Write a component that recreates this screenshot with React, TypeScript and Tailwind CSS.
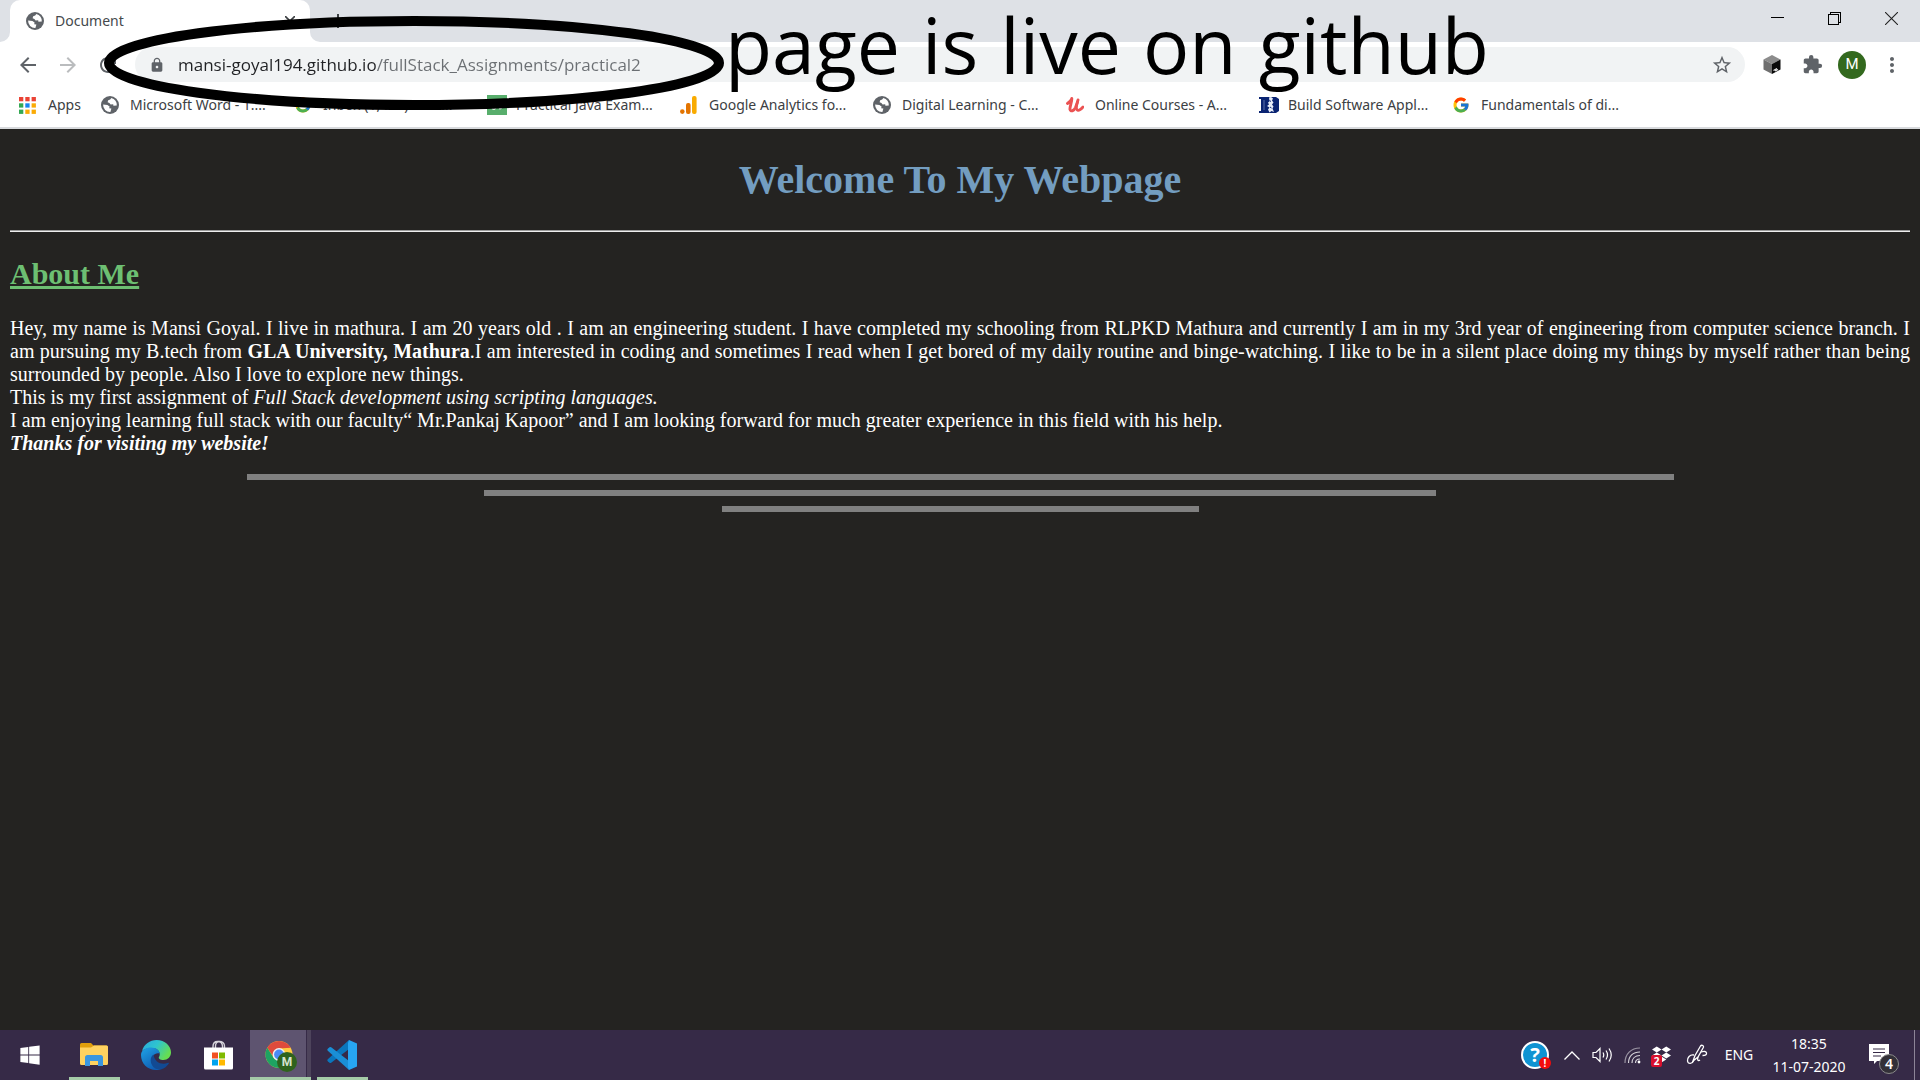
import React from "react";
import { FcGoogle } from "react-icons/fc";
import { FaDropbox, FaWindows } from "react-icons/fa";
import { MdArrowBack, MdArrowForward, MdExtension, MdLock, MdMoreVert, MdRefresh, MdStarBorder } from "react-icons/md";

function Globe() {
  return (
    <svg viewBox="0 0 18 18" className="size-[18px] shrink-0" aria-hidden="true">
      <circle cx="9" cy="9" r="9" fill="#5f6368" />
      <path d="M10.3 2.1 9.2 3.5 7.2 4.2 6.6 6.3 8.4 6.9 9.6 8.4 12.2 8.2 12.4 9.8 15.8 9.6A6.9 6.9 0 0 0 10.3 2.1Z" fill="#fff" />
      <path d="M2.1 8.6 6.4 8.9 8.6 10.4 8.2 12.2 10.4 12.6 9.4 15.9A6.9 6.9 0 0 1 2.1 8.6Z" fill="#fff" />
    </svg>
  );
}

function AppsGrid() {
  const colors = ["#ea4335", "#ea4335", "#ea4335", "#34a853", "#1a85f0", "#fbab05", "#34a853", "#fbab05", "#fbab05"];
  return (
    <svg viewBox="0 0 17 17" className="size-[17px] shrink-0" aria-hidden="true">
      {colors.map((c, i) => (
        <rect key={i} x={(i % 3) * 6.3} y={Math.floor(i / 3) * 6.3} width="4.3" height="4.3" fill={c} />
      ))}
    </svg>
  );
}

function GreenBadge() {
  return (
    <svg viewBox="0 0 20 20" className="size-5 shrink-0" aria-hidden="true">
      <rect width="20" height="20" fill="#58ae6c" />
      <path d="M5 13.5c2 1.500 4 0 4-2V7M12 13.500c2 .5 3-1 3-3V7" stroke="#fff" strokeWidth="1.400" fill="none" />
    </svg>
  );
}

function AnalyticsIcon() {
  return (
    <svg viewBox="0 0 18 18" className="size-[18px] shrink-0" aria-hidden="true">
      <rect x="12" y="0" width="4.600" height="18" rx="2" fill="#f9ab00" />
      <rect x="6" y="7" width="4.600" height="11" rx="2" fill="#e37400" />
      <circle cx="2.300" cy="15.600" r="2.300" fill="#e37400" />
    </svg>
  );
}

function UdemyIcon() {
  return (
    <svg viewBox="0 0 18 18" className="size-[18px] shrink-0" fill="none" stroke="#eb5252" strokeLinecap="round" strokeLinejoin="round" aria-hidden="true">
      <path d="M1.500 7.500C3.500 6 5.500 4 5.800 2.500 6 6 3.500 11 4 13.500c.5 2.500 4 1.500 5.500-2C10.500 9 11.500 6 12 4" strokeWidth="2.900" />
      <path d="M11.500 6C10 10.500 10 14 12 14.300c1.700.2 3.500-1.600 5-3.300" strokeWidth="2.700" />
    </svg>
  );
}

function DukeIcon() {
  return (
    <svg viewBox="0 0 20 18" className="h-[18px] w-5 shrink-0" aria-hidden="true">
      <path d="M0 1h17l3 2v12l-3 2H0v-2h2V3H0Z" fill="#0a2472" />
      <path d="M5 4v10" stroke="#5c72ad" strokeWidth="1" />
      <path d="M10 1.500 12 1l2 1.500-1 2 1.500 2-1.500 2 1.500 2-1 2 1.500 3.500-2.500-1-2 1.500-1.500-3 1.500-2-2.500-1.500 2-1.500-1-2 1.500-1Z" fill="#e8edf8" />
      <path d="m10.500 4.500 1.500 1M11 11l1.500 1" stroke="#0a2472" strokeWidth="1" />
    </svg>
  );
}

const bookmarks = [
  { label: "Microsoft Word - 1....", icon: <Globe /> },
  { label: "Inbox (1,479) - ma...", icon: <FcGoogle className="size-[18px] shrink-0" /> },
  { label: "Practical Java Exam...", icon: <GreenBadge /> },
  { label: "Google Analytics fo...", icon: <AnalyticsIcon /> },
  { label: "Digital Learning - C...", icon: <Globe /> },
  { label: "Online Courses - A...", icon: <UdemyIcon /> },
  { label: "Build Software Appl...", icon: <DukeIcon /> },
  { label: "Fundamentals of di...", icon: <FcGoogle className="size-[18px] shrink-0" /> },
];

function TabStrip() {
  return (
    <div className="flex h-[42px] bg-[#dee1e6] pl-2.5">
      <div className="relative flex w-[300px] items-center rounded-t-[10px] bg-white pr-3 pl-4 text-sm text-[#45494d]">
        <svg className="absolute bottom-0 -left-2.5 size-2.5" viewBox="0 0 10 10" aria-hidden="true">
          <path d="M10 0v10H0A10 10 0 0 0 10 0Z" fill="#fff" />
        </svg>
        <svg className="absolute -right-2.5 bottom-0 size-2.5" viewBox="0 0 10 10" aria-hidden="true">
          <path d="M0 0v10h10A10 10 0 0 1 0 0Z" fill="#fff" />
        </svg>
        <Globe />
        <span className="ml-[11px] flex-1">Document</span>
        <button aria-label="Close tab" className="flex size-4 items-center justify-center">
          <svg viewBox="0 0 10 10" className="size-2.5" stroke="#3c4043" strokeWidth="1.600">
            <path d="m0 0 10 10M10 0 0 10" />
          </svg>
        </button>
      </div>
      <button aria-label="New tab" className="ml-5 flex w-4 items-center justify-center">
        <svg viewBox="0 0 14 14" className="size-3.5" stroke="#3c4043" strokeWidth="2">
          <path d="M7 0v14M0 7h14" />
        </svg>
      </button>
      <div className="ml-auto flex h-9">
        <button aria-label="Minimize" className="flex w-[57px] items-center justify-center">
          <svg viewBox="0 0 13 13" className="size-[13px]" stroke="#000" shapeRendering="crispEdges">
            <path d="M0 5.500h13" />
          </svg>
        </button>
        <button aria-label="Restore" className="flex w-[57px] items-center justify-center">
          <svg viewBox="0 0 13 13" className="size-[13px]" stroke="#000" fill="none" shapeRendering="crispEdges">
            <path d="M.5 2.500h10v10H.5ZM2.500 2.500v-2h10v10h-2" />
          </svg>
        </button>
        <button aria-label="Close" className="flex w-[57px] items-center justify-center">
          <svg viewBox="0 0 13 13" className="size-[13px]" stroke="#222" strokeWidth="1.100">
            <path d="m0 0 13 13M13 0 0 13" />
          </svg>
        </button>
      </div>
    </div>
  );
}

function Toolbar() {
  return (
    <div className="flex h-[45px] items-center bg-white px-2 text-[#5f6368]">
      <button aria-label="Back" className="flex w-10 justify-center">
        <MdArrowBack className="size-6" />
      </button>
      <button aria-label="Forward" className="flex w-10 justify-center text-[#babcbe]">
        <MdArrowForward className="size-6" />
      </button>
      <button aria-label="Reload" className="flex w-10 justify-center">
        <MdRefresh className="size-6" />
      </button>
      <div className="ml-[7px] flex h-[35px] flex-1 items-center rounded-full bg-[#f1f3f4] pr-3 pl-3.5">
        <MdLock className="size-4" />
        <input
          aria-label="Address"
          className="ml-[13px] flex-1 bg-[linear-gradient(to_right,#202124_199px,#6b6f73_199px)] bg-clip-text font-['Open_Sans',sans-serif] text-[17px] text-transparent outline-none"
          defaultValue="mansi-goyal194.github.io/fullStack_Assignments/practical2"
        />
        <button aria-label="Bookmark this page">
          <MdStarBorder className="size-[22px]" />
        </button>
      </div>
      <div className="ml-[7px] flex items-center">
        <button aria-label="Cube extension" className="flex w-10 justify-center">
          <svg viewBox="0 0 18 19" className="h-[19px] w-[18px]">
            <path d="m9 0 8.500 4.500-8.500 4.500L.5 4.500Z" fill="#8c8c8c" />
            <path d="M.5 4.500 9 9v10L.5 14.500Z" fill="#6f6f6f" />
            <path d="M17.500 4.500 9 9v10l8.500-4.500Z" fill="#0a0a0a" />
            <path d="m10.500 15.500 3.500-2M12 16l3-1.500" stroke="#eee" strokeWidth="1.200" />
          </svg>
        </button>
        <button aria-label="Extensions" className="flex w-10 justify-center">
          <MdExtension className="size-[21px]" />
        </button>
        <button aria-label="Profile" className="mx-1.5 flex size-7 items-center justify-center rounded-full bg-[#33691e] font-[Roboto] text-[15px] text-white">
          M
        </button>
        <button aria-label="Menu" className="flex w-10 justify-center">
          <MdMoreVert className="size-6" />
        </button>
      </div>
    </div>
  );
}

function BookmarksBar() {
  return (
    <nav className="flex h-[42px] border-b-2 border-[#d8dadd] bg-white pb-1 pl-[19px] text-sm text-[#3c4043]">
      <a href="#apps" className="flex w-[82px] items-center gap-3">
        <AppsGrid />
        Apps
      </a>
      {bookmarks.map((b) => (
        <a key={b.label} href="#bookmark" className="flex w-[193px] items-center whitespace-nowrap">
          <span className="flex w-[29px]">{b.icon}</span>
          {b.label}
        </a>
      ))}
    </nav>
  );
}

function Annotation() {
  return (
    <div className="pointer-events-none absolute inset-x-0 top-0 text-black">
      <svg viewBox="0 0 640 110" className="absolute top-0 left-[94px] h-[110px] w-[640px]" aria-hidden="true">
        <ellipse cx="320" cy="63" rx="305" ry="42" fill="none" stroke="#000" strokeWidth="10" />
      </svg>
      <div className="absolute top-0 left-[725px] flex w-[764px] justify-between font-['Open_Sans',sans-serif] text-[77px] leading-[90px]">
        <span>page</span>
        <span>is</span>
        <span>live</span>
        <span>on</span>
        <span>github</span>
      </div>
    </div>
  );
}

function Page() {
  return (
    <main className="flex-1 bg-[#242321] px-2.5 pt-7 font-['Liberation_Serif',serif] text-xl leading-[23px] text-white">
      <h1 className="text-center text-[40px] leading-[46px] font-bold text-[#739dc0]">Welcome To My Webpage</h1>
      <hr className="mt-[27px] h-0.5 border-t border-b border-t-[#9a9a9a] border-b-[#eeeeee]" />
      <h2 className="mt-[25px] text-[30px] leading-[34px] font-bold text-[#6dbf72] underline">About Me</h2>
      <p className="mt-[26px] text-justify">
        Hey, my name is Mansi Goyal. I live in mathura. I am 20 years old . I am an engineering student. I have completed my
        schooling from RLPKD Mathura and currently I am in my 3rd year of engineering from computer science branch. I am
        pursuing my B.tech from <b>GLA University, Mathura</b>.I am interested in coding and sometimes I read when I get bored
        of my daily routine and binge-watching. I like to be in a silent place doing my things by myself rather than being
        surrounded by people. Also I love to explore new things.
        <br />
        This is my first assignment of <i>Full Stack development using scripting languages.</i>
        <br />I am enjoying learning full stack with our faculty“ Mr.Pankaj Kapoor” and I am looking forward for much greater
        experience in this field with his help.
        <br />
        <b>
          <i>Thanks for visiting my website!</i>
        </b>
      </p>
      <div className="mt-[19px] flex flex-col items-center gap-2.5">
        <hr className="box-content h-1 w-3/4 border border-[#808080] bg-[#808080]" />
        <hr className="box-content h-1 w-1/2 border border-[#808080] bg-[#808080]" />
        <hr className="box-content h-1 w-1/4 border border-[#808080] bg-[#808080]" />
      </div>
    </main>
  );
}

function ExplorerIcon() {
  return (
    <svg viewBox="0 0 28 24" className="h-6 w-7" aria-hidden="true">
      <path d="M0 1.500Q0 0 1.500 0H11l2.500 2.500H26.500Q28 2.500 28 4v8H0Z" fill="#e09e0c" />
      <path d="M0 4.500h11l3-2h12.500Q28 2.500 28 4v16.500q0 1.500-1.500 1.500h-25Q0 22 0 20.500Z" fill="#ffd260" />
      <path d="M5 23V14.500Q5 12 7.500 12h13q2.500 0 2.500 2.500V23h-5v-5h-8v5Z" fill="#3a96e0" />
    </svg>
  );
}

function EdgeIcon() {
  return (
    <svg viewBox="0 0 30 30" className="size-[30px]" aria-hidden="true">
      <defs>
        <linearGradient id="edge-top" x1="0" y1="0" x2="1" y2=".5">
          <stop offset="0" stopColor="#2aa7df" />
          <stop offset=".5" stopColor="#2ec4cf" />
          <stop offset="1" stopColor="#66dd51" />
        </linearGradient>
        <linearGradient id="edge-left" x1="0" y1="0" x2=".6" y2="1">
          <stop offset="0" stopColor="#1fa3e6" />
          <stop offset="1" stopColor="#0f5cb2" />
        </linearGradient>
      </defs>
      <path d="M1 11C3 4 9 0 15.500 0 24 0 30 6 30 12.500c0 4.500-3.500 7.500-7.500 7.500-3.500 0-5.500-1.500-4.500-3 2.500-4-1-9-7-9-4 0-8 1-10 3Z" fill="url(#edge-top)" />
      <path d="M0 15C0 10 5 7.500 10 7.500c5 0 8.500 3 8.800 6-5-1.500-9 3-7.300 8C13 26 17 29 20 29c-2 1-4 1-5 1C6.500 30 0 23.500 0 15Z" fill="url(#edge-left)" />
      <path d="M12.500 14.500c-5 3-3.500 14 5.500 15 4 .2 7.500-2.500 9.800-6 .4-.6-.2-1-.8-.7-6 2.700-13.500-.3-14.500-8.300Z" fill="#124a93" />
    </svg>
  );
}

function StoreIcon() {
  return (
    <svg viewBox="0 0 30 30" className="size-[30px]" aria-hidden="true">
      <path d="M10 8V6.500C10 3 12 1.500 14.500 1.500S19.500 3 19.500 6.500V8M12.500 8V6c0-3 1.500-4.500 4-4.500S21.500 3 21.500 6v2" stroke="#d6d3da" strokeWidth="1.400" fill="none" />
      <path d="M1 7.500h29V28q0 1.500-1.500 1.500h-26Q1 29.500 1 28Z" fill="#fff" />
      <path d="M9 12.500h6v6H9Z" fill="#f25022" />
      <path d="M16 12.500h6v6h-6Z" fill="#7fba00" />
      <path d="M9 19.500h6v6H9Z" fill="#00a4ef" />
      <path d="M16 19.500h6v6h-6Z" fill="#ffb900" />
    </svg>
  );
}

function ChromeIcon() {
  return (
    <span className="relative flex size-[30px]">
      <svg viewBox="0 0 30 30" className="size-[30px]" aria-hidden="true">
        <circle cx="14" cy="14.500" r="13.500" fill="#ffcd40" />
        <path d="M2.300 7.700A13.500 13.500 0 0 1 25.700 7.700L14 8.500l-5.200 9Z" fill="#de4b3c" />
        <path d="M2.300 7.700 8.600 17.800 14 20.500 14 28A13.500 13.500 0 0 1 2.300 7.700Z" fill="#1ea362" />
        <circle cx="14" cy="14.500" r="6.400" fill="#f1f1f1" />
        <circle cx="14" cy="14.500" r="4.900" fill="#4a8af4" />
      </svg>
      <span className="absolute -right-0.5 -bottom-0.5 flex size-5 items-center justify-center rounded-full bg-[#2f631d] font-[Roboto] text-xs font-bold text-[#d5e3cf]">
        M
      </span>
    </span>
  );
}

function CodeIcon() {
  return (
    <svg viewBox="0 0 30 30" className="size-[30px]" aria-hidden="true">
      <path d="M22 0 .8 19.200q-1 1 0 2l1.700 1.500q.8.600 1.700 0L22 9Z" fill="#0a76bd" />
      <path d="M22 30 .8 10.800q-1-1 0-2l1.700-1.500q.8-.6 1.700 0L22 21Z" fill="#1a8fd6" />
      <path d="M22 0 30 3.500v23L22 30l-1-3V3Z" fill="#27a5f2" />
    </svg>
  );
}

function TaskButton({ label, running, active, children }: { label: string; running?: boolean; active?: boolean; children: React.ReactNode }) {
  return (
    <button aria-label={label} className="relative flex h-full w-[62px] items-center justify-center">
      {active && (
        <span className="absolute inset-0 flex">
          <span className="ml-px w-14 bg-[#5e5470]" />
          <span className="ml-px flex-1 bg-[#4d435b]" />
        </span>
      )}
      {running && (
        <span className="absolute inset-x-0 bottom-0 flex justify-center">
          <span className={active ? "ml-px h-[3px] w-full bg-[#a5cba8]" : "h-[3px] w-[51px] bg-[#a5cba8]"} />
        </span>
      )}
      <span className="relative">{children}</span>
    </button>
  );
}

function Taskbar() {
  return (
    <footer className="flex h-[50px] bg-[#362a47] text-white">
      <button aria-label="Start" className="mr-[3px] flex w-[60px] items-center justify-center">
        <FaWindows className="size-[22px]" />
      </button>
      <TaskButton label="File Explorer" running>
        <ExplorerIcon />
      </TaskButton>
      <TaskButton label="Edge">
        <EdgeIcon />
      </TaskButton>
      <TaskButton label="Store">
        <StoreIcon />
      </TaskButton>
      <TaskButton label="Chrome" running active>
        <ChromeIcon />
      </TaskButton>
      <TaskButton label="Code" running>
        <CodeIcon />
      </TaskButton>

      <div className="ml-auto flex items-center">
        <button aria-label="Help" className="relative flex size-7 items-center justify-center rounded-full border-2 border-white bg-[#0f93d2] text-xl font-bold">
          ?
          <span className="absolute -right-1 -bottom-0.5 flex size-3 items-center justify-center rounded-full bg-[#f20d0d] text-[10px] leading-3">!</span>
        </button>
        <button aria-label="Show hidden icons" className="ml-3.5 flex w-[18px] justify-center">
          <svg viewBox="0 0 16 9" className="h-[9px] w-4" fill="none" stroke="#fff" strokeWidth="1.300">
            <path d="M.5 8.500 8 1l7.500 7.500" />
          </svg>
        </button>
        <button aria-label="Volume" className="ml-[11px] w-[22px]">
          <svg viewBox="0 0 22 18" className="h-[18px] w-[22px]" fill="none" stroke="#fff" strokeWidth="1.200">
            <path d="M1 6.500h3l4-4v13l-4-4H1ZM11 6.500q1.500 2.500 0 5M14 4.500q3 4.500 0 9M17 2.500q4.500 6.500 0 13" />
          </svg>
        </button>
        <button aria-label="Network" className="ml-2.5 w-[18px]">
          <svg viewBox="0 0 18 18" className="size-[18px]" fill="none" stroke="#fff" strokeWidth="1.200">
            <path d="M1 17C1 8 7 2 16 2" opacity=".5" />
            <path d="M4.500 17C4.500 10 9 6 16 6M8 17c0-4.500 3-7.500 8-7.500M11.500 17c0-2.500 1.500-4 4.500-4" opacity=".8" />
            <circle cx="15" cy="16" r="1.400" fill="#fff" stroke="none" />
          </svg>
        </button>
        <button aria-label="Dropbox" className="relative ml-[9px] flex size-5 justify-end">
          <FaDropbox className="size-[19px]" />
          <span className="absolute -bottom-0.5 left-0 flex h-3 w-[11px] items-center justify-center rounded-xs bg-[#d9102e] text-[10px] font-bold">2</span>
        </button>
        <button aria-label="Pen" className="ml-[15px] w-[22px]">
          <svg viewBox="0 0 22 22" className="size-[22px]" fill="none" stroke="#fff" strokeWidth="1.300">
            <path d="M7 17 9 11.500 14.500 2q1-1.200 2.200-.5t.6 2L12 13Z" />
            <path d="M8 11c-4-1-7 3-6.500 6s4.500 3.500 6 0M12 13c-1 3 0 4.500 2 3M15 8q5-1.500 5.500 1t-4 2.500" />
          </svg>
        </button>
        <button className="ml-[15px] w-8 text-sm">ENG</button>
        <div className="ml-3 w-[84px] text-center text-sm leading-[23px]">
          <div>18:35</div>
          <div>11-07-2020</div>
        </div>
        <button aria-label="Notifications" className="relative ml-3.5 h-[30px] w-[34px]">
          <svg viewBox="0 0 20 20" className="absolute top-1 left-1 size-5">
            <path d="M0 0h20v17H8l-3 3v-3H0Z" fill="#fff" />
            <path d="M4 5h12M4 8.500h12M4 12h8" stroke="#362a47" strokeWidth="1.200" />
          </svg>
          <span className="absolute right-0 -bottom-1 flex size-5 items-center justify-center rounded-full border border-[#8b8b8b] bg-[#333038] text-sm leading-none font-semibold">4</span>
        </button>
        <div className="ml-[15px] h-[50px] w-1.5 border-l border-[#8d8598]" />
      </div>
    </footer>
  );
}

export default function App() {
  return (
    <div className="relative flex min-h-screen flex-col font-['Noto_Sans',sans-serif]">
      <header>
        <TabStrip />
        <Toolbar />
        <BookmarksBar />
      </header>
      <Page />
      <Taskbar />
      <Annotation />
    </div>
  );
}
